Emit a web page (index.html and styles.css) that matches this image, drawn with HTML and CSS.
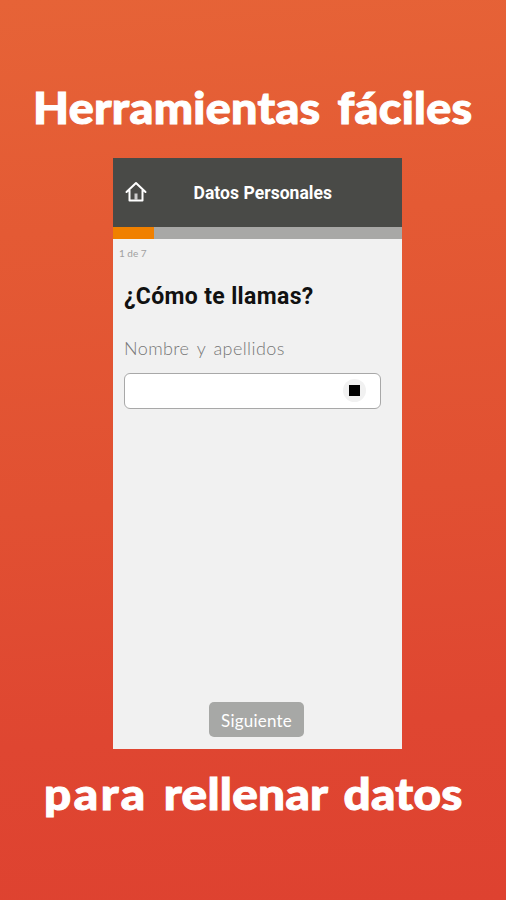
FILE: index.html
```html
<!DOCTYPE html>
<html lang="es">
<head>
<meta charset="utf-8">
<title>Datos Personales</title>
<link rel="stylesheet" href="styles.css">
</head>
<body>
<main class="promo">
  <h1 class="headline headline-top"><span>Herramientas fáciles</span></h1>
  <section class="phone">
    <header class="bar">
      <svg class="home" viewBox="0 0 22 22" width="22" height="22" fill="none" stroke="#fff" stroke-width="2" stroke-linejoin="round" stroke-linecap="round"><path d="M1.500 11 11 2 20.500 11M4.500 9.500V19.500H17.500V9.500"/><path d="M11 19V12.500" stroke="#ccc" stroke-width="3" stroke-linecap="butt"/></svg>
      <h2 class="title">Datos Personales</h2>
    </header>
    <div class="progress"><div class="progress-fill"></div></div>
    <div class="content">
      <p class="step">1 de 7</p>
      <h3 class="question">¿Cómo te llamas?</h3>
      <p class="label">Nombre y apellidos</p>
      <div class="field"><div class="stop"><div class="stop-mark"></div></div></div>
      <button class="next">Siguiente</button>
    </div>
  </section>
  <p class="headline headline-bottom"><span><b class="loose">para</b> rellenar datos</span></p>
</main>
</body>
</html>
```
FILE: styles.css
```css
* { box-sizing: border-box; margin: 0; padding: 0; }
body { width: 506px; height: 900px; overflow: hidden; }
.promo {
  height: 900px;
  display: flex;
  flex-direction: column;
  background: linear-gradient(176deg, #e66337 0%, #e45a34 25%, #e15032 55%, #df4631 80%, #de4230 100%);
}
.headline {
  font: 900 43px/52px Lato, sans-serif;
  color: #fff;
  white-space: nowrap;
  letter-spacing: 0.3px;
  -webkit-text-stroke: 1px #fff;
}
.headline span { display: inline-block; transform-origin: 0 50%; }
.headline-top { padding: 82px 0 0 33px; height: 158px; word-spacing: 5px; }
.headline-top span { transform: scaleX(1.084); }
.headline-bottom { padding: 19px 0 0 44px; word-spacing: 4px; }
.headline-bottom span { transform: scaleX(1.107); }
.loose { font-weight: inherit; letter-spacing: 2.3px; }
.phone {
  width: 289px;
  height: 591px;
  margin-left: 112.5px;
  flex: none;
  display: flex;
  flex-direction: column;
  background: #f1f1f1;
}
.bar { height: 69px; background: #494a47; display: flex; align-items: center; padding-left: 12px; }
.home { flex: none; margin-top: -2px; }
.title { margin-left: 47px; font: 700 17.500px/24px Roboto, sans-serif; color: #fff; white-space: nowrap; letter-spacing: 0.05px; }
.progress { height: 12px; background: #a8a8a6; }
.progress-fill { width: 41px; height: 12px; background: #f08000; }
.content { flex: 1; display: flex; flex-direction: column; padding: 7px 21px 12px 11.5px; }
.step { margin-left: -5px; font: 400 10px/14px Lato, sans-serif; color: #a0a0a0; }
.question { margin-top: 22px; font: 700 23px/30px Roboto, sans-serif; color: #111; white-space: nowrap; letter-spacing: 0.35px; }
.label { margin-top: 24px; font: 300 18px/24px Lato, sans-serif; color: #777; white-space: nowrap; letter-spacing: 0.4px; word-spacing: 2.5px; }
.field {
  margin-top: 13px;
  height: 36px;
  border: 1.500px solid #a8a8a8;
  border-radius: 6px;
  background: #fff;
  display: flex;
  justify-content: flex-end;
  padding: 5px 14px 0 0;
}
.stop { width: 23px; height: 23px; border-radius: 50%; background: #f1f1f1; display: flex; align-items: center; justify-content: center; }
.stop-mark { width: 11px; height: 11px; background: #000; }
.next {
  margin: auto 0 0 85px;
  padding-top: 2px;
  width: 95px;
  height: 35px;
  border: 0;
  border-radius: 5px;
  background: #a7a8a6;
  color: #fff;
  font: 400 17px/24px Lato, sans-serif;
  letter-spacing: 0.2px;
}
```
